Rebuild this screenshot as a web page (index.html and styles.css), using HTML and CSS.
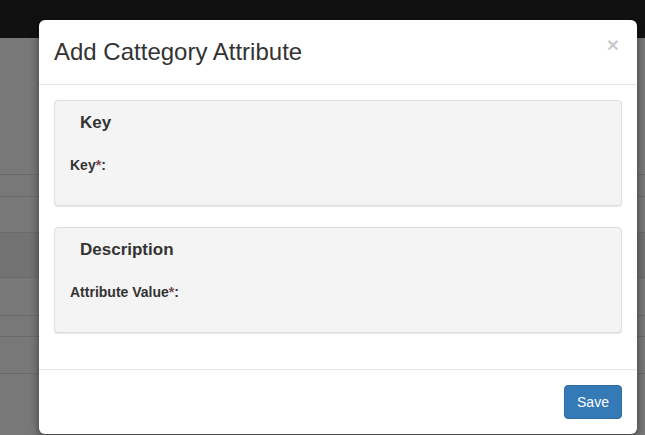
FILE: index.html
```html
<!DOCTYPE html>
<html>
<head>
<meta charset="utf-8">
<link rel="stylesheet" href="styles.css">
</head>
<body>
<div class="page">
  <div class="navbar"></div>
  <div class="rows">
    <div class="row r1"></div>
    <div class="row r2"></div>
    <div class="row r3"></div>
    <div class="row r4 dark"></div>
    <div class="row r5"></div>
    <div class="row r6"></div>
    <div class="row r7"></div>
    <div class="row r8"></div>
  </div>
</div>
<div class="modal">
  <div class="modal-header">
    <h4 class="modal-title">Add Cattegory Attribute</h4>
    <span class="close">&times;</span>
  </div>
  <div class="modal-body">
    <div class="panel">
      <div class="panel-title">Key</div>
      <div class="label">Key<span class="req">*</span>:</div>
    </div>
    <div class="panel">
      <div class="panel-title">Description</div>
      <div class="label">Attribute Value<span class="req">*</span>:</div>
    </div>
  </div>
  <div class="modal-footer">
    <button class="btn">Save</button>
  </div>
</div>
</body>
</html>
```

FILE: styles.css
```css
* { box-sizing: border-box; }
html, body { margin: 0; padding: 0; }
body {
  width: 645px;
  height: 435px;
  overflow: hidden;
  background: #787878;
  font-family: "Liberation Sans", Arial, sans-serif;
  color: #333;
  position: relative;
}
.page { display: flex; flex-direction: column; }
.navbar { height: 38px; background: #111; }
.rows { display: flex; flex-direction: column; }
.row { border-bottom: 1px solid #6a6a6a; }
.r1 { height: 137px; }
.r2 { height: 22px; }
.r3 { height: 36px; }
.r4 { height: 45px; }
.r5 { height: 38px; }
.r6 { height: 21px; }
.r7 { height: 37px; }
.r8 { height: 60px; border-bottom: none; }
.dark { background: #727272; }

.modal {
  position: absolute;
  left: 39px;
  top: 20px;
  width: 598px;
  background: #fff;
  border-radius: 6px;
  box-shadow: 0 3px 9px rgba(0,0,0,.5);
  display: flex;
  flex-direction: column;
}
.modal-header {
  height: 65px;
  padding: 15px 15px 0 15px;
  border-bottom: 1px solid #e5e5e5;
  display: flex;
  justify-content: space-between;
  align-items: flex-start;
}
.modal-title {
  margin: 0;
  font-size: 24px;
  font-weight: 400;
  line-height: 34px;
  color: #333;
}
.close {
  font-size: 21px;
  font-weight: 700;
  line-height: 1;
  color: #000;
  opacity: .2;
  margin-top: -1px;
  margin-right: 3px;
}
.modal-body {
  padding: 15px 15px 36px 15px;
  display: flex;
  flex-direction: column;
  gap: 21px;
}
.panel {
  height: 106px;
  background: #f4f4f4;
  border: 1px solid #dedede;
  border-radius: 4px;
  box-shadow: 0 1px 1px rgba(0,0,0,.1);
  padding: 12px 15px 0 15px;
  display: flex;
  flex-direction: column;
}
.panel-title {
  font-size: 17px;
  font-weight: 700;
  line-height: 20px;
  padding-left: 10px;
  color: #333;
}
.label {
  margin-top: 22px;
  font-size: 14px;
  font-weight: 700;
  line-height: 20px;
  color: #333;
}
.req { color: #7a4450; }
.modal-footer {
  padding: 15px;
  border-top: 1px solid #e5e5e5;
  display: flex;
  justify-content: flex-end;
}
.btn {
  height: 34px;
  width: 58px;
  padding: 0;
  font-family: "Liberation Sans", Arial, sans-serif;
  font-size: 14px;
  color: #fff;
  background: #337ab7;
  border: 1px solid #2e6da4;
  border-radius: 4px;
}
```
